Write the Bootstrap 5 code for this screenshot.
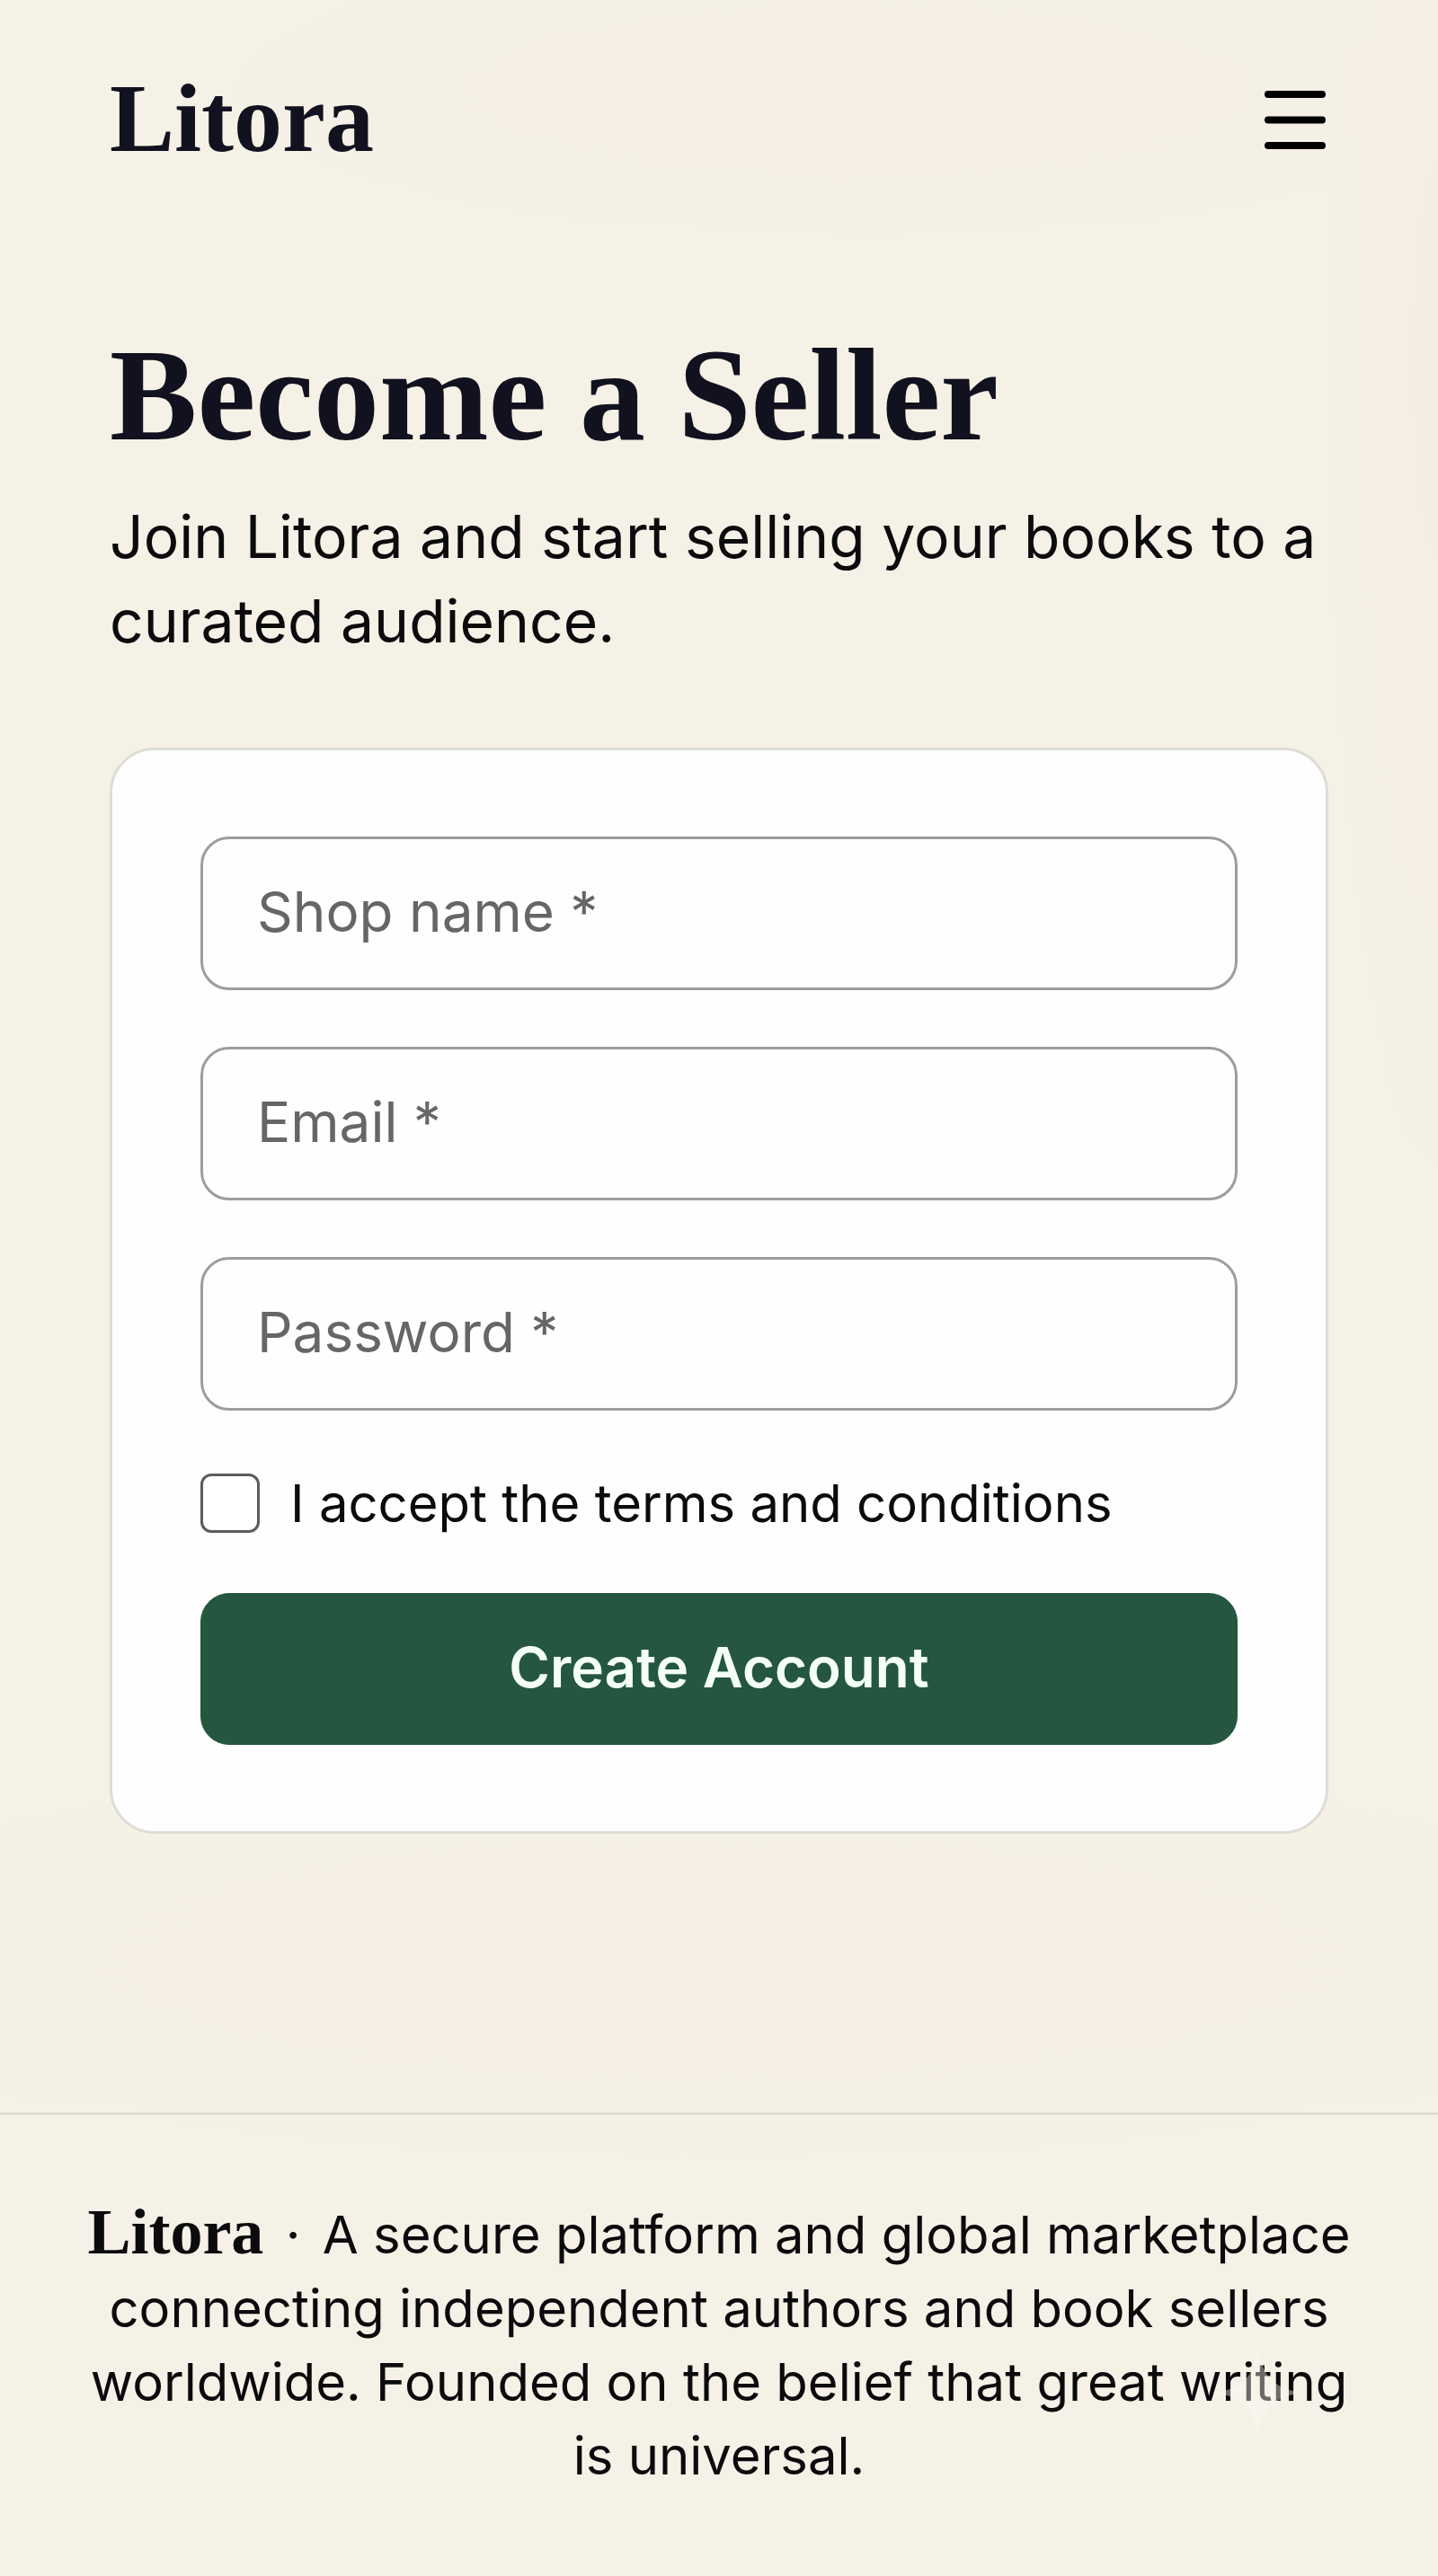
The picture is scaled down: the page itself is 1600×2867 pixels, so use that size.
<!DOCTYPE html>
<html lang="en">
<head>
<meta charset="utf-8">
<meta name="viewport" content="width=device-width, initial-scale=1">
<title>Litora – Become a Seller</title>
<link href="https://cdn.jsdelivr.net/npm/bootstrap@5.3.0/dist/css/bootstrap.min.css" rel="stylesheet">
<style>
  body {
    background: #f5f1e6;
    color: #0b0b0d;
    font-family: Inter, "Liberation Sans", sans-serif;
  }
  .page-tint {
    background:
      radial-gradient(ellipse 700px 160px at 60% 100px, #f5eee4, transparent),
      radial-gradient(ellipse 120px 900px at 100% 400px, #f5ede3, transparent),
      radial-gradient(ellipse 1100px 220px at 50% 2180px, #f5eee3, transparent);
  }
  .brand-serif { font-family: "Liberation Serif", serif; font-weight: 700; }
  .site-header { padding: 72px 122px 0; }
  .site-logo { font-size: 108px; line-height: 120px; color: #12111f; }
  .menu-toggle svg { width: 72px; height: 72px; display: block; }
  .seller-main { padding: 168px 122px 96px; }
  .seller-title { font-size: 146px; line-height: 160px; color: #12111f; margin-bottom: 30px; }
  .seller-intro { font-size: 66px; line-height: 94px; margin-bottom: 94px; }
  .seller-card {
    border: 3px solid #deddd5;
    border-radius: 50px;
    padding: 96px 98px;
    background: #fefefe;
  }
  .field-stack { gap: 63px; }
  .seller-field {
    height: 171px;
    padding: 0 60px 4px;
    border: 3px solid #9c9e9d;
    border-radius: 32px;
    font-size: 62px;
    background: #fefefe;
  }
  .seller-field::placeholder { color: #666; opacity: 1; }
  .terms-row { margin: 70px 0 67px; gap: 34px; }
  .terms-box.form-check-input {
    width: 66px;
    height: 66px;
    border: 3px solid #5c5c5c;
    border-radius: 12px;
  }
  .terms-text { font-size: 58px; line-height: 66px; }
  .create-btn {
    --bs-btn-bg: #25563f;
    --bs-btn-color: #f4fff8;
    --bs-btn-border-color: #25563f;
    --bs-btn-hover-bg: #1d4632;
    --bs-btn-hover-color: #fff;
    height: 169px;
    padding: 0 60px 4px;
    border-radius: 32px;
    font-size: 62px;
    font-weight: 600;
  }
  .site-footer {
    border-top: 3px solid #dcdcd1;
    padding: 92px 84px 93px;
    font-size: 58px;
    line-height: 82px;
  }
  .footer-logo { font-size: 72px; line-height: 72px; }
  .footer-dot { margin: 0 8px; }
  .footer-spark { right: 150px; bottom: 154px; width: 100px; height: 100px; pointer-events: none; }
</style>
</head>
<body>
<div class="page-tint d-flex flex-column min-vh-100">
  <header class="site-header d-flex justify-content-between align-items-center">
    <a href="#" class="site-logo brand-serif text-decoration-none">Litora</a>
    <button type="button" class="menu-toggle btn border-0 p-0 mt-1" aria-label="Menu">
      <svg viewBox="0 0 72 72" fill="none" stroke="#000" stroke-width="8" stroke-linecap="round"><path d="M5 7H65M5 35.500H65M5 64H65"/></svg>
    </button>
  </header>

  <main class="seller-main">
    <h1 class="seller-title brand-serif">Become a Seller</h1>
    <p class="seller-intro">Join Litora and start selling your books to a curated audience.</p>

    <form class="seller-card">
      <div class="field-stack d-flex flex-column">
        <label class="d-block" for="shop">
          <input id="shop" type="text" class="seller-field form-control" placeholder="Shop name *" aria-label="Shop name">
        </label>
        <label class="d-block" for="email">
          <input id="email" type="email" class="seller-field form-control" placeholder="Email *" aria-label="Email">
        </label>
        <label class="d-block" for="password">
          <input id="password" type="password" class="seller-field form-control" placeholder="Password *" aria-label="Password">
        </label>
      </div>
      <div class="terms-row d-flex align-items-center">
        <input id="terms" type="checkbox" class="terms-box form-check-input flex-shrink-0 m-0">
        <label for="terms" class="terms-text">I accept the terms and conditions</label>
      </div>
      <button type="submit" class="create-btn btn w-100">Create Account</button>
    </form>
  </main>

  <footer class="site-footer position-relative text-center mt-auto">
    <p class="mb-0"><span class="footer-logo brand-serif">Litora</span> <span class="footer-dot">·</span> A secure platform and global marketplace connecting independent authors and book sellers worldwide. Founded on the belief that great writing is universal.</p>
    <svg class="footer-spark position-absolute" viewBox="0 0 100 100" aria-hidden="true"><path d="M50 0C54 32 68 46 100 50C68 54 54 68 50 100C46 68 32 54 0 50C32 46 46 32 50 0Z" fill="#fbf9f3" fill-opacity=".4"/></svg>
  </footer>
</div>
<script src="https://cdn.jsdelivr.net/npm/bootstrap@5.3.0/dist/js/bootstrap.bundle.min.js"></script>
</body>
</html>
